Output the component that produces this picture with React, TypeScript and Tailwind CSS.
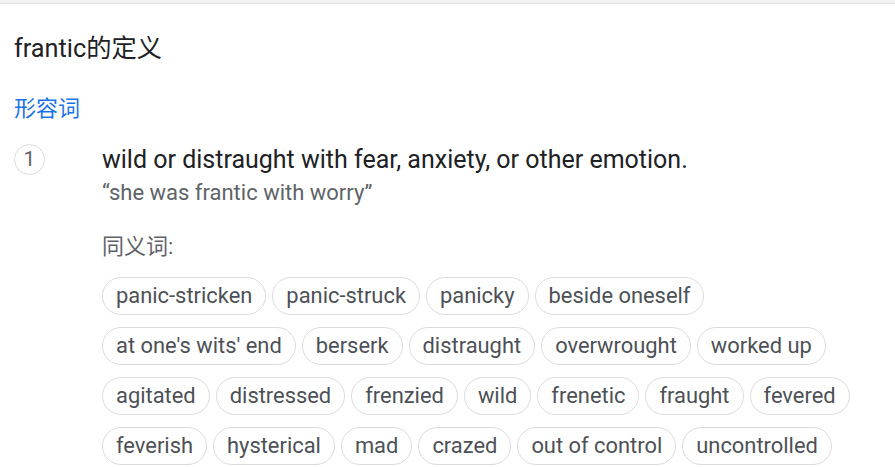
import React from 'react';

const synonyms = [
  'panic-stricken', 'panic-struck', 'panicky', 'beside oneself',
  "at one's wits' end", 'berserk', 'distraught', 'overwrought', 'worked up',
  'agitated', 'distressed', 'frenzied', 'wild', 'frenetic', 'fraught', 'fevered',
  'feverish', 'hysterical', 'mad', 'crazed', 'out of control', 'uncontrolled',
];

const Chip = ({ label }: { label: string }) => (
  <div className="h-[38px] px-[13px] flex items-center border border-[#dadce0] rounded-full text-[21.9px] leading-[36px] text-[#4d5156] whitespace-nowrap">
    {label}
  </div>
);

export default function App() {
  return (
    <div
      className="w-[895px] h-[467px] bg-white overflow-hidden"
      style={{ fontFamily: 'Roboto, "Noto Sans CJK SC", sans-serif' }}
    >
      <div className="h-[4px] bg-[#f2f2f2] border-b border-[#e0e0e0]" />

      <div className="pl-[14px] pr-[14px]">
        {/* header */}
        <div className="pt-[29px] text-[25.25px] leading-[32px] text-[#202124]">
          frantic的定义
        </div>
        <div className="mt-[29px] text-[22px] leading-[30px] text-[#1a73e8]">形容词</div>

        {/* sense 1 */}
        <div className="mt-[19px] flex">
          <div className="mt-[1px] w-[31px] h-[31px] shrink-0 rounded-full border border-[#dadce0] flex items-center justify-center text-[21px] text-[#5f6368]">
            1
          </div>
          <div className="ml-[57px] flex-1">
            <div className="mt-[1px] text-[25px] leading-[32px] text-[#202124]">
              wild or distraught with fear, anxiety, or other emotion.
            </div>
            <div className="mt-[2px] text-[22px] leading-[30px] text-[#5f6368]">
              “she was frantic with worry”
            </div>
            <div className="mt-[24px] text-[22px] leading-[30px] text-[#5f6368]">同义词:</div>
            <div className="mt-[15px] flex flex-wrap gap-x-[6px] gap-y-[12px]">
              {synonyms.map((s) => (
                <Chip key={s} label={s} />
              ))}
            </div>
          </div>
        </div>
      </div>
    </div>
  );
}
